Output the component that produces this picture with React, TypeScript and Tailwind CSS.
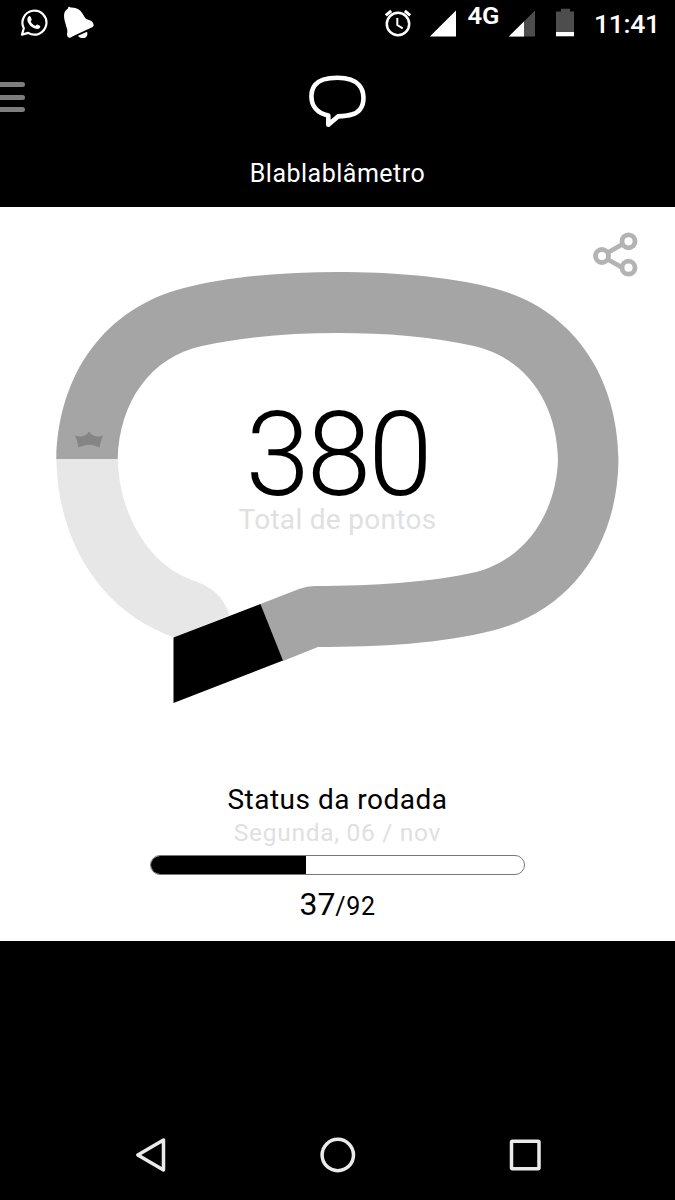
import type { ReactNode } from 'react'

const round = { points: 37, total: 92, percent: 41.5 }

function StatusBar() {
  return (
    <div className="flex h-[46px] items-center justify-between">
      <svg className="ml-5 h-[46px] w-[76px]" viewBox="20 0 76 46" fill="none">
        <path
          d="M22 34.6 23.8 28.2A12 12 0 1 1 28.2 32.9Z"
          stroke="#fff"
          strokeWidth="2.2"
          strokeLinejoin="round"
        />
        <path
          d="M28.6 16.4c.8-.6 1.7-.3 2 .4l1.1 2.7c.2.6-.9 1.6-1 2 .9 2 2.4 3.4 4.5 4.3.5 0 1.3-1.6 2-1.4l2.7 1.3c.7.4.3 1.7-.2 2.3-1.1 1.1-2.9 1.3-4.8.6-3.8-1.4-6-4-7.1-6.5-.8-2-.6-4.6.8-5.700Z"
          fill="#fff"
        />
        <path
          d="M68 8.400c-.2-1.900 1.700-2.300 2.500-.8 5.500-.4 9.300 1.700 11.800 5.600l2.900 4.800c1.200 1.500 3.300 1.600 5.100 2.400 2.600 1.200 3.700 3.700 3.300 5.300-.3 1-1.800 1.600-2.600 2l-18.700 8.700c-1.300.6-2 1.700-3.200 1.300-1.900-.5-2.500-2.900-1.800-5.400.2-1.400-.1-3.300-.8-5l-1.400-5c-1.500-5.700-2-11.200 2.900-13.900Z"
          fill="#fff"
        />
        <path d="M78 35.700 87 31.700c1.300 3.700-.8 6.400-4.200 6.400-2.200 0-3.900-.9-4.800-2.400Z" fill="#fff" />
      </svg>

      <div className="flex h-full">
        <svg className="h-[46px] w-[216px]" viewBox="380 0 216 46" fill="none">
          <g stroke="#fff" strokeWidth="2.5">
            <circle cx="398" cy="24" r="11.2" />
            <path d="m385.800 15.400 5.400-4.600M410.200 15.400l-5.400-4.600" strokeWidth="3" />
            <path d="M397.300 18v7l5.400 3.300" strokeWidth="2" />
          </g>
          <path d="M456 10.500v26h-26.200Z" fill="#fff" />
          <path d="M535 10.500v26h-26.200Z" fill="#4d4d4d" />
          <path d="M524 21.400v15.100h-15.200Z" fill="#fff" />
          <path d="M556 11.500h5v-2.700h9v2.700h4v20.500h-18Z" fill="#4d4d4d" />
          <path d="M556 32h18v4.300h-18Z" fill="#fff" />
          <text x="467.5" y="24.200" fill="#fff" fontSize="23" fontWeight="600" textLength="32" lengthAdjust="spacingAndGlyphs">
            4G
          </text>
        </svg>
        <span className="-ml-[2px] w-[81px] pt-[8px] text-[26.5px] font-medium leading-8 tracking-[-0.3px] text-white">
          11:41
        </span>
      </div>
    </div>
  )
}

function Header() {
  return (
    <header className="h-[161px]">
      <div className="grid h-[104px] grid-cols-[1fr_60px_1fr] items-start">
        <div className="flex flex-col gap-[7.5px] pt-[36px]">
          <span className="h-[5px] w-[24.5px] rounded-r-full bg-[#7d7d7d]" />
          <span className="h-[5px] w-[24.5px] rounded-r-full bg-[#7d7d7d]" />
          <span className="h-[5px] w-[24.5px] rounded-r-full bg-[#7d7d7d]" />
        </div>
        <svg className="mt-[27px] h-[56px] w-[60px]" viewBox="308 73 60 56" fill="none">
          <path
            d="M337.500 77.800c-12 0-18.500 2.200-22.500 7.200-5 6.500-4.600 17.500.5 23.500 3.200 3.800 7.200 5.900 12.800 7v9.200l9.700-8.300c11.500-.2 18.500-2 22-7 5-6.500 4.500-18-1-24.300-4.200-5-9.800-7.300-21.500-7.300Z"
            stroke="#fff"
            strokeWidth="4.600"
            strokeLinejoin="round"
          />
        </svg>
      </div>
      <h1 className="pt-[9px] text-center text-[25px] leading-[30px] tracking-[0.5px] text-white">Blablablâmetro</h1>
    </header>
  )
}

function ShareIcon() {
  return (
    <svg className="h-[48px] w-[48px]" viewBox="592 231 48 48" fill="none" stroke="#b3b3b3" strokeWidth="4.800">
      <path d="m608 252.500 14-8M608 259.500l14 8" />
      <circle cx="602" cy="256" r="6.500" />
      <circle cx="628.500" cy="241.300" r="6.500" />
      <circle cx="628.500" cy="267.700" r="6.500" />
    </svg>
  )
}

function Gauge({ children }: { children: ReactNode }) {
  return (
    <div className="relative mx-auto h-[434px] w-[565px]">
      <svg className="h-full w-full" viewBox="55 271 565 434">
        {/* remaining part of the track */}
        <path
          d="M56.300 459H117.700C119 514 149 565 192 580C211 586 224 597 229.500 615L174 637.500C103 612 58 545 56.300 459Z"
          fill="#e7e7e7"
        />
        {/* filled part */}
        <path
          d="M56.300 459C58 374 105 308 184 288C229 276 286 272 338 272C389 272 447 276 493 288C571 308 617.500 374 618.500 460C617.500 546 570 611 493 630.500C442 643.500 380 647 318 647L283 661L260.500 604L299 589Q307 586 315 586C374 586 433 582 476 572C524 560 556 515 558 460C557 403 526 358 474 346C431 336.500 386 333 338 333C289 333 245 337 202 346C150 357 119 403 117.700 459Z"
          fill="#a5a5a5"
        />
        <path d="M173.500 637.500 260.500 604 283 660.500 173.500 703Z" fill="#000" />
        <path
          d="M75 435.400q4.800 1.800 8.500.6 4-1.300 5.500-4.600 1.500 3.300 5.500 4.600 3.700 1.200 8.500-.6-2.500 5.500-3.500 12-10.500-5.400-21 0-1-6.500-3.500-12Z"
          fill="#858585"
        />
      </svg>
      <div className="absolute inset-x-0 top-[138px] flex flex-col items-center">{children}</div>
    </div>
  )
}

function RoundStatus() {
  return (
    <section className="flex flex-col items-center pt-[78px]">
      <h2 className="text-[28px] leading-[34px] tracking-[0.5px] text-black">Status da rodada</h2>
      <p className="text-[24.5px] leading-[32px] tracking-[0.7px] text-[#e0e0e0]">Segunda, 06 / nov</p>
      <div className="mt-[6px] h-[20px] w-[375px] overflow-hidden rounded-full border border-[#777]">
        <div className="h-full bg-black" style={{ width: `${round.percent}%` }} />
      </div>
      <p className="mt-[9px] text-[32px] leading-[40px] text-black">
        {round.points}
        <span className="text-[25px] tracking-[0.6px]">/{round.total}</span>
      </p>
    </section>
  )
}

function NavigationBar() {
  return (
    <nav className="flex h-[90px] items-center justify-center gap-[147px]">
      <svg className="h-10 w-10" viewBox="0 0 40 40" fill="none" stroke="#eaeaea" strokeWidth="3.500">
        <path d="M32.500 5v30L6.800 20Z" strokeLinejoin="round" />
      </svg>
      <svg className="h-10 w-10" viewBox="0 0 40 40" fill="none" stroke="#eaeaea" strokeWidth="3.500">
        <circle cx="19.800" cy="20" r="15.700" />
      </svg>
      <svg className="h-10 w-10" viewBox="0 0 40 40" fill="none" stroke="#eaeaea" strokeWidth="3.500">
        <rect x="6.500" y="6.300" width="27.500" height="27.500" rx="1" />
      </svg>
    </nav>
  )
}

export default function App() {
  return (
    <div className="flex h-[1200px] w-[675px] flex-col overflow-hidden bg-black font-['Roboto',sans-serif]">
      <StatusBar />
      <Header />
      <main className="h-[734px] bg-white">
        <div className="flex h-[64px] items-start justify-end pr-[35px] pt-6">
          <ShareIcon />
        </div>
        <Gauge>
          <strong className="text-[116px] font-light leading-[92px] tracking-[-3px] text-black">380</strong>
          <span className="mt-[3px] text-[28px] leading-8 tracking-[0.3px] text-[#e0e0e0]">Total de pontos</span>
        </Gauge>
        <RoundStatus />
      </main>
      <div className="grow" />
      <NavigationBar />
    </div>
  )
}
